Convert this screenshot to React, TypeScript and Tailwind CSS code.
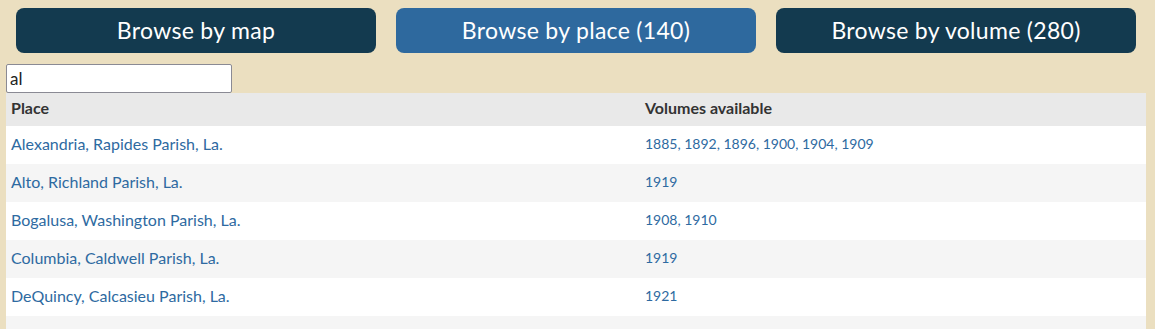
import { useState } from 'react'

const places = [
  { name: 'Alexandria, Rapides Parish, La.', volumes: ['1885', '1892', '1896', '1900', '1904', '1909'] },
  { name: 'Alto, Richland Parish, La.', volumes: ['1919'] },
  { name: 'Bogalusa, Washington Parish, La.', volumes: ['1908', '1910'] },
  { name: 'Columbia, Caldwell Parish, La.', volumes: ['1919'] },
  { name: 'DeQuincy, Calcasieu Parish, La.', volumes: ['1921'] },
  { name: 'Florien, Sabine Parish, La.', volumes: ['1913'] },
]

const font = { fontFamily: 'Lato, "Noto Sans", sans-serif' }

export default function App() {
  const [query, setQuery] = useState('al')

  return (
    <div className="min-h-screen bg-[#ebdfc0] pt-2" style={font}>
      <div className="flex gap-5 pl-4 pr-[19px]">
        <button className="h-[45px] flex-1 rounded-lg bg-[#133a4f] pb-[1px] text-[23px] tracking-[0.3px] text-white">
          Browse by map
        </button>
        <button className="h-[45px] flex-1 rounded-lg bg-[#2e699e] pb-[1px] text-[23px] tracking-[0.3px] text-white">
          Browse by place (140)
        </button>
        <button className="h-[45px] flex-1 rounded-lg bg-[#133a4f] pb-[1px] text-[23px] tracking-[0.3px] text-white">
          Browse by volume (280)
        </button>
      </div>

      <div className="mt-[11px] pl-[6px] pr-[9px]">
        <input
          value={query}
          onChange={(e) => setQuery(e.target.value)}
          className="block h-[29px] w-[226px] rounded-[2px] border border-[#8a8a94] bg-white px-[3px] text-[17px] text-[#222] outline-none"
          style={font}
        />
        <table className="w-full border-collapse">
          <thead>
            <tr className="h-[33px] bg-[#e9e9e9] text-left text-[16px] text-[#333]">
              <th className="w-[634px] pb-[3px] pl-[5px] font-bold">Place</th>
              <th className="pb-[3px] pl-[5px] font-bold">Volumes available</th>
            </tr>
          </thead>
          <tbody>
            {places.map((p, i) => (
              <tr key={p.name} className={`h-[38px] ${i % 2 ? 'bg-[#f5f5f5]' : 'bg-white'}`}>
                <td className="pb-[3px] pl-[5px] text-[16px] text-[#2e6aa1]">{p.name}</td>
                <td className="pb-[3px] pl-[5px] text-[14px] text-[#2e6aa1]">{p.volumes.join(', ')}</td>
              </tr>
            ))}
          </tbody>
        </table>
      </div>
    </div>
  )
}
